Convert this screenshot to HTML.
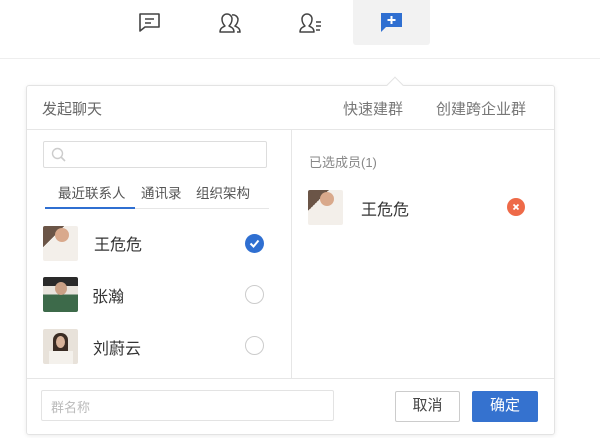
<!DOCTYPE html>
<html><head><meta charset="utf-8"><style>
*{margin:0;padding:0;box-sizing:border-box}
body{width:600px;height:438px;background:#fff;position:relative;overflow:hidden;font-family:"Liberation Sans","Noto Sans CJK SC",sans-serif}
.abs{position:absolute}
.t{position:absolute;white-space:nowrap}
.av{position:absolute;width:35px;height:35px;border-radius:2px;overflow:hidden}
.rad{position:absolute;width:19px;height:19px;border-radius:50%;border:1px solid #ccc;background:#fff}
</style></head><body>
<div class="abs" style="left:353px;top:0;width:77px;height:45px;background:#f2f2f2;border-radius:0 0 3px 3px"></div>
<svg class="abs" style="left:138px;top:12px" width="24" height="22" viewBox="0 0 24 22"><path d="M2 2h19v13H7l-5 4z" fill="none" stroke="#444" stroke-width="1.6" stroke-linejoin="round"/><path d="M7 7h9M7 11h6" stroke="#444" stroke-width="1.6"/></svg>
<svg class="abs" style="left:218px;top:12px" width="26" height="22" viewBox="0 0 26 22"><path d="M2 20c0-4 3-5 5-6-2-2-3-4-3-7a5 5 0 0110 0c0 3-1 5-3 7 2 1 5 2 5 6z" fill="none" stroke="#444" stroke-width="1.5" stroke-linejoin="round"/><path d="M14 3a5 5 0 016 4c0 3-1 5-3 7 2 1 5 2 5 6h-3" fill="none" stroke="#444" stroke-width="1.5"/></svg>
<svg class="abs" style="left:298px;top:12px" width="26" height="22" viewBox="0 0 26 22"><path d="M2 20c0-4 3-5 5-6-2-2-3-4-3-7a5 5 0 0110 0c0 3-1 5-3 7 2 1 5 2 5 6z" fill="none" stroke="#444" stroke-width="1.5" stroke-linejoin="round"/><path d="M18 10h5M18 14h5M18 18h4" stroke="#444" stroke-width="1.4"/></svg>
<svg class="abs" style="left:380px;top:12px" width="23" height="21" viewBox="0 0 23 21"><path d="M1 1h21v14H6l-5 5z" fill="#2f6fd1"/><path d="M11.5 4v8M7.5 8h8" stroke="#fff" stroke-width="2"/></svg>
<div class="abs" style="left:0;top:58px;width:600px;height:1px;background:#eee"></div>
<div class="abs" style="left:26px;top:85px;width:529px;height:350px;border:1px solid #e3e3e3;border-radius:3px;box-shadow:0 1px 4px rgba(0,0,0,.08)"></div>
<div class="abs" style="left:389px;top:79px;width:12px;height:12px;background:#fff;border-left:1px solid #e3e3e3;border-top:1px solid #e3e3e3;transform:rotate(45deg)"></div>
<div class="t" style="left:42px;top:98px;font-size:15px;color:#666">发起聊天</div>
<div class="t" style="left:343px;top:98px;font-size:15px;color:#777">快速建群</div>
<div class="t" style="left:436px;top:98px;font-size:15px;color:#777">创建跨企业群</div>
<div class="abs" style="left:27px;top:129px;width:527px;height:1px;background:#e6e6e6"></div>
<div class="abs" style="left:291px;top:130px;width:1px;height:248px;background:#e6e6e6"></div>
<div class="abs" style="left:27px;top:378px;width:527px;height:1px;background:#e6e6e6"></div>
<div class="abs" style="left:43px;top:141px;width:224px;height:27px;border:1px solid #ddd;border-radius:2px"></div>
<svg class="abs" style="left:51px;top:147px" width="16" height="16" viewBox="0 0 16 16"><circle cx="6.5" cy="6.5" r="5" fill="none" stroke="#ccc" stroke-width="1.4"/><path d="M10 10l4 4" stroke="#ccc" stroke-width="1.6"/></svg>
<div class="t" style="left:58px;top:182px;font-size:13.5px;color:#555">最近联系人</div>
<div class="t" style="left:141px;top:182px;font-size:13.5px;color:#555">通讯录</div>
<div class="t" style="left:196px;top:182px;font-size:13.5px;color:#555">组织架构</div>
<div class="abs" style="left:45px;top:208px;width:224px;height:1px;background:#e6e6e6"></div>
<div class="abs" style="left:45px;top:207px;width:90px;height:2px;background:#2f6fd1"></div>
<div class="av" style="left:43px;top:226px;background:linear-gradient(135deg,#6b5547 0 30%,#f3efea 30%)"><div class="abs" style="left:12px;top:2px;width:14px;height:14px;border-radius:50%;background:#d9a98c"></div></div>
<div class="t" style="left:94px;top:231px;font-size:16px;color:#333">王危危</div>
<div class="abs" style="left:245px;top:234px;width:19px;height:19px;border-radius:50%;background:#2f6fd1"></div>
<svg class="abs" style="left:245px;top:234px" width="19" height="19"><path d="M5.5 9.5l3 3 5-6" fill="none" stroke="#fff" stroke-width="2"/></svg>
<div class="av" style="left:43px;top:277px;background:linear-gradient(180deg,#2a2a2a 0 25%,#e9e4dd 25% 50%,#3d6a4a 50%)"><div class="abs" style="left:12px;top:5px;width:12px;height:13px;border-radius:50%;background:#caa085"></div></div>
<div class="t" style="left:92px;top:283px;font-size:16px;color:#333">张瀚</div>
<div class="rad" style="left:245px;top:285px"></div>
<div class="av" style="left:43px;top:329px;background:#e8e2da"><div class="abs" style="left:10px;top:4px;width:15px;height:31px;border-radius:7px 7px 0 0;background:#3a2c24"></div><div class="abs" style="left:13px;top:7px;width:9px;height:12px;border-radius:50%;background:#d8b39a"></div><div class="abs" style="left:6px;top:22px;width:24px;height:13px;background:#f4f1ec"></div></div>
<div class="t" style="left:93px;top:335px;font-size:16px;color:#333">刘蔚云</div>
<div class="rad" style="left:245px;top:336px"></div>
<div class="t" style="left:309px;top:152px;font-size:13px;color:#888">已选成员(1)</div>
<div class="av" style="left:308px;top:190px;background:linear-gradient(135deg,#6b5547 0 30%,#f3efea 30%)"><div class="abs" style="left:12px;top:2px;width:14px;height:14px;border-radius:50%;background:#d9a98c"></div></div>
<div class="t" style="left:361px;top:196px;font-size:16px;color:#333">王危危</div>
<div class="abs" style="left:507px;top:198px;width:18px;height:18px;border-radius:50%;background:#ee6a48"></div>
<svg class="abs" style="left:507px;top:198px" width="18" height="18"><path d="M6.5 6.5l5 5M11.5 6.5l-5 5" stroke="#fff" stroke-width="1.8"/></svg>
<div class="abs" style="left:41px;top:390px;width:293px;height:31px;border:1px solid #e3e3e3;border-radius:2px"></div>
<div class="t" style="left:51px;top:397px;font-size:13px;color:#bbb">群名称</div>
<div class="abs" style="left:395px;top:391px;width:65px;height:31px;border:1px solid #ccc;border-radius:2px;font-size:15px;color:#444;text-align:center;line-height:28px">取消</div>
<div class="abs" style="left:472px;top:391px;width:66px;height:31px;background:#3572cf;border-radius:2px;font-size:15px;color:#fff;text-align:center;line-height:29px">确定</div>
</body></html>
